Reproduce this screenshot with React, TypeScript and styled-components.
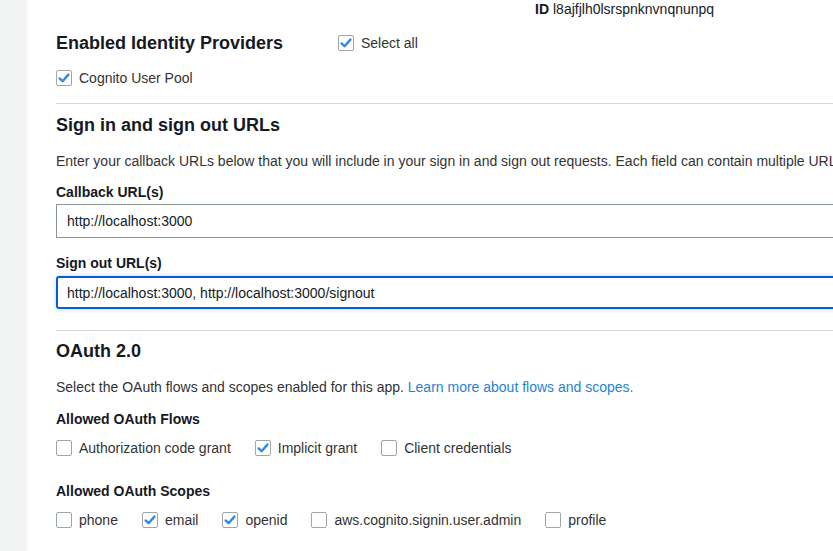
import React, { useEffect, useRef } from "react";
import styled, { createGlobalStyle } from "styled-components";

const GlobalStyle = createGlobalStyle`
  html, body {
    margin: 0;
    padding: 0;
    background: #ffffff;
    font-family: "Liberation Sans", Arial, Helvetica, sans-serif;
    color: #16191f;
  }
  * { box-sizing: border-box; }
`;

const Page = styled.div`
  display: flex;
  width: 833px;
  height: 551px;
  overflow: clip;
  background: #ffffff;
`;

const Sidebar = styled.div`
  flex: 0 0 26px;
  background: #f2f3f3;
  box-shadow: 1px 0 2px rgba(0, 0, 0, 0.06);
`;

const Main = styled.div`
  flex: 1;
  min-width: 0;
  padding-left: 30px;
  overflow: clip;
`;

const Content = styled.div`
  width: 860px;
`;

const IdRow = styled.div`
  display: grid;
  grid-template-columns: 479px auto;
  font-size: 14px;
  line-height: 18px;
  color: #16191f;
`;

const IdText = styled.div`
  b {
    font-weight: 700;
    margin-right: 4px;
  }
`;

const HeaderRow = styled.div`
  display: grid;
  grid-template-columns: 282px auto;
  align-items: center;
  margin-top: 13px;
`;

const Heading = styled.h2<{ $top: number }>`
  margin: ${(p) => p.$top}px 0 0;
  font-size: 18px;
  line-height: 24px;
  font-weight: 700;
  color: #16191f;
`;

const Divider = styled.hr<{ $top: number }>`
  margin: ${(p) => p.$top}px 0 0;
  border: none;
  border-top: 1px solid #d5dbdb;
  height: 0;
`;

const Description = styled.p`
  margin: 14px 0 0;
  font-size: 14px;
  line-height: 20px;
  color: #333;
  white-space: nowrap;
`;

const Link = styled.a`
  color: #1f83d3;
  text-decoration: none;
`;

const FieldLabel = styled.div<{ $top: number }>`
  margin-top: ${(p) => p.$top}px;
  font-size: 14px;
  line-height: 20px;
  font-weight: 700;
  color: #16191f;
`;

const TextInput = styled.input<{ $top: number; $focused?: boolean }>`
  display: block;
  width: 100%;
  margin-top: ${(p) => p.$top}px;
  height: ${(p) => (p.$focused ? 33 : 34)}px;
  padding: 0 ${(p) => (p.$focused ? 9 : 10)}px;
  font-family: inherit;
  font-size: 14px;
  color: #16191f;
  background: #fff;
  border: ${(p) => (p.$focused ? "2px solid #0a5bd6" : "1px solid #879596")};
  border-radius: ${(p) => (p.$focused ? "3px" : "0")};
  box-shadow: ${(p) => (p.$focused ? "0 0 5px rgba(10, 91, 214, 0.25)" : "none")};
  outline: none;
  caret-color: #000;
`;

const CheckRow = styled.div<{ $top: number }>`
  display: flex;
  align-items: center;
  gap: 24px;
  margin-top: ${(p) => p.$top}px;
  height: 20px;
`;

const CheckItem = styled.label`
  display: flex;
  align-items: center;
  gap: 7px;
  font-size: 14px;
  line-height: 20px;
  color: #333;
  white-space: nowrap;
`;

const Box = styled.span`
  display: inline-flex;
  align-items: center;
  justify-content: center;
  width: 16px;
  height: 16px;
  border: 1px solid #9ba7a8;
  border-radius: 2px;
  background: #fff;
  flex: 0 0 16px;
`;

type CheckProps = { label: string; checked?: boolean };

function Check({ label, checked }: CheckProps) {
  return (
    <CheckItem>
      <Box>
        {checked && (
          <svg width="14" height="14" viewBox="0 0 14 14">
            <path
              d="M2.6 7.4 L5.6 10.2 L11.4 3.6"
              fill="none"
              stroke="#2f8ae0"
              strokeWidth="2.4"
              strokeLinecap="round"
              strokeLinejoin="round"
            />
          </svg>
        )}
      </Box>
      {label}
    </CheckItem>
  );
}

const signOutValue = "http://localhost:3000, http://localhost:3000/signout";

export default function App() {
  const signOutRef = useRef<HTMLInputElement>(null);

  useEffect(() => {
    const el = signOutRef.current;
    if (el) {
      el.focus({ preventScroll: true });
      el.setSelectionRange(signOutValue.length, signOutValue.length);
    }
  }, []);

  return (
    <>
      <GlobalStyle />
      <Page>
        <Sidebar />
        <Main>
          <Content>
            <IdRow>
              <span />
              <IdText>
                <b>ID</b>l8ajfjlh0lsrspnknvnqnunpq
              </IdText>
            </IdRow>

            <HeaderRow>
              <Heading $top={0}>Enabled Identity Providers</Heading>
              <Check label="Select all" checked />
            </HeaderRow>
            <CheckRow $top={13}>
              <Check label="Cognito User Pool" checked />
            </CheckRow>

            <Divider $top={15} />

            <Heading $top={9}>Sign in and sign out URLs</Heading>
            <Description>
              Enter your callback URLs below that you will include in your sign in and sign out
              requests. Each field can contain multiple URLs.
            </Description>
            <FieldLabel $top={11}>Callback URL(s)</FieldLabel>
            <TextInput $top={2} defaultValue="http://localhost:3000" />
            <FieldLabel $top={15}>Sign out URL(s)</FieldLabel>
            <TextInput $top={3} $focused ref={signOutRef} defaultValue={signOutValue} />

            <Divider $top={21} />

            <Heading $top={8}>OAuth 2.0</Heading>
            <Description>
              Select the OAuth flows and scopes enabled for this app.{" "}
              <Link href="#">Learn more about flows and scopes.</Link>
            </Description>

            <FieldLabel $top={12}>Allowed OAuth Flows</FieldLabel>
            <CheckRow $top={9}>
              <Check label="Authorization code grant" />
              <Check label="Implicit grant" checked />
              <Check label="Client credentials" />
            </CheckRow>

            <FieldLabel $top={23}>Allowed OAuth Scopes</FieldLabel>
            <CheckRow $top={9}>
              <Check label="phone" />
              <Check label="email" checked />
              <Check label="openid" checked />
              <Check label="aws.cognito.signin.user.admin" />
              <Check label="profile" />
            </CheckRow>
          </Content>
        </Main>
      </Page>
    </>
  );
}
